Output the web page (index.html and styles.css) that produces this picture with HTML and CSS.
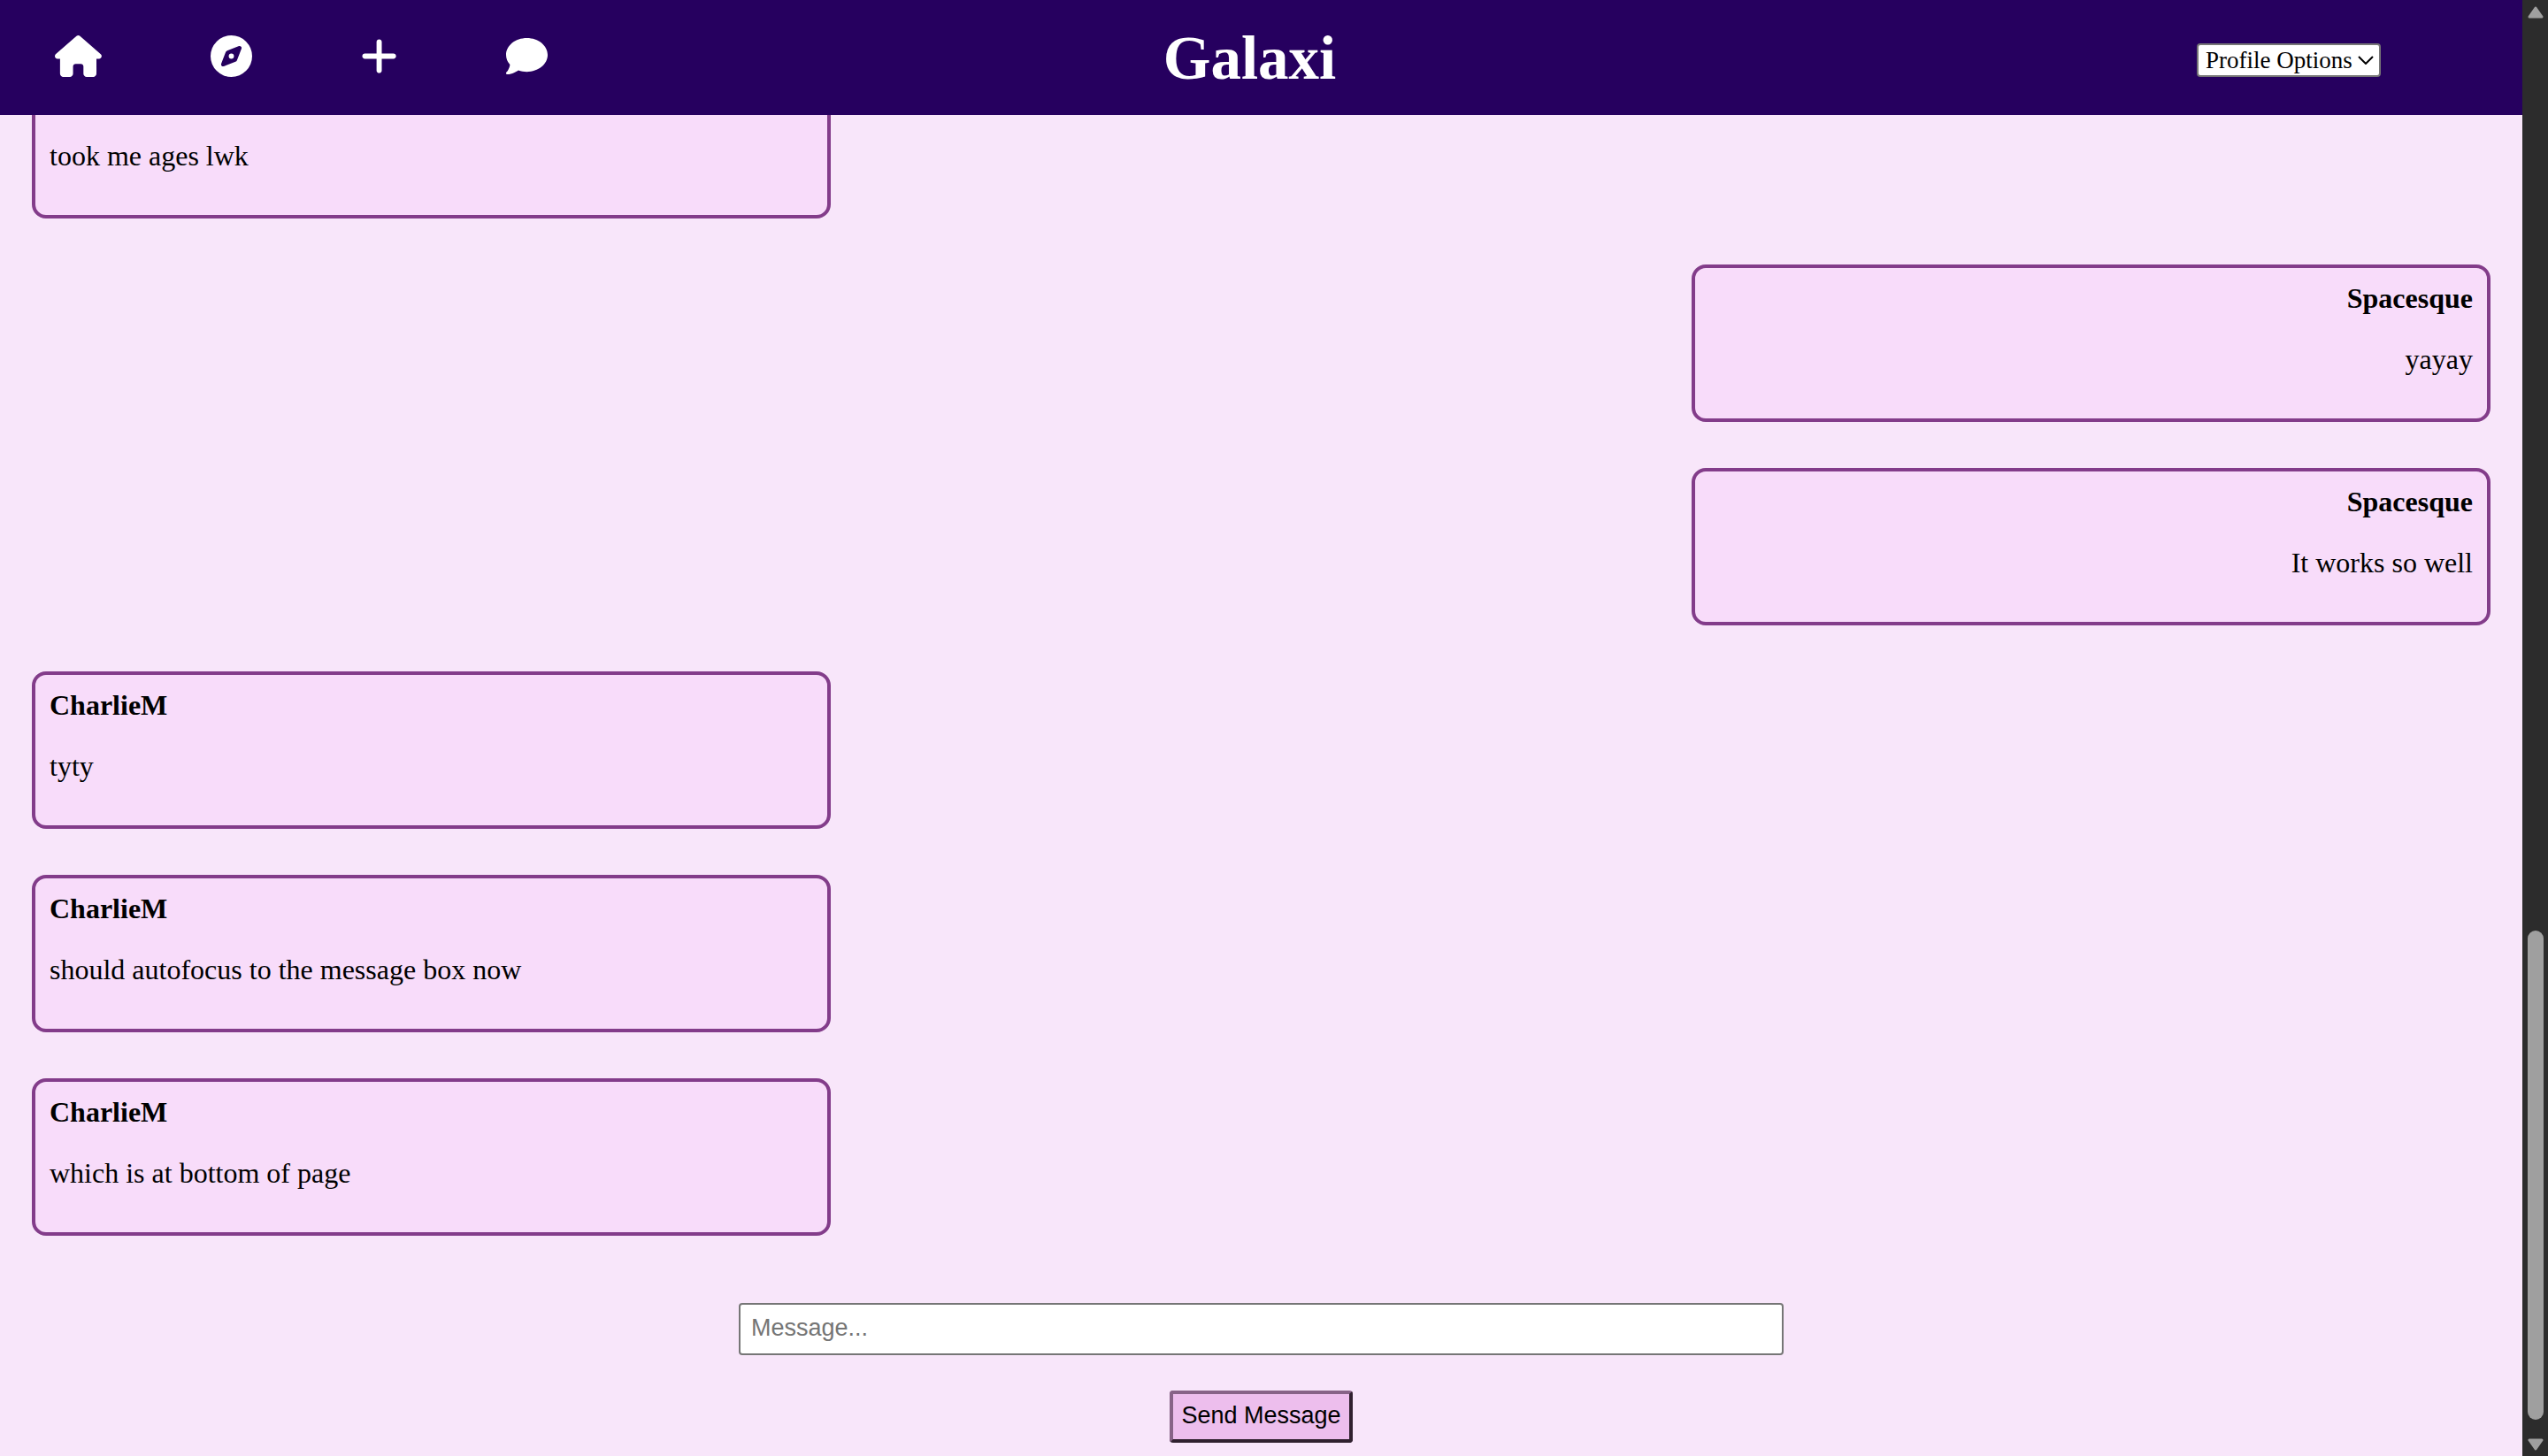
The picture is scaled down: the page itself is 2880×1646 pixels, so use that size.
FILE: index.html
```html
<!DOCTYPE html>
<html lang="en">
<head>
<meta charset="utf-8">
<meta name="viewport" content="width=device-width, initial-scale=1">
<title>Galaxi</title>
<link rel="stylesheet" href="styles.css">
</head>
<body>
<div class="page">
  <header class="topbar">
    <nav class="nav" aria-label="Main">
      <a href="#home" aria-label="Home"><svg class="icon" viewBox="0 0 576 512"><path d="M575.8 255.5c0 18-15 32.1-32 32.1h-32l.7 160.2c0 2.7-.2 5.4-.5 8.1V472c0 22.1-17.9 40-40 40H456c-1.1 0-2.2 0-3.3-.1c-1.4 .1-2.8 .1-4.2 .1H416 392c-22.1 0-40-17.9-40-40V448 384c0-17.7-14.3-32-32-32H256c-17.7 0-32 14.3-32 32v64 24c0 22.1-17.9 40-40 40H160 128.1c-1.5 0-3-.1-4.5-.2c-1.2 .1-2.4 .2-3.6 .2H104c-22.1 0-40-17.9-40-40V360c0-.9 0-1.9 .1-2.8V287.6H32c-18 0-32-14-32-32.1c0-9 3-17 10-24L266.4 8c7-7 15-8 22-8s15 2 21 7L564.8 231.5c8 7 12 15 11 24z"/></svg></a>
      <a href="#explore" aria-label="Explore"><svg class="icon" viewBox="0 0 512 512"><path d="M256 512A256 256 0 1 0 256 0a256 256 0 1 0 0 512zm50.7-186.9L162.4 380.6c-19.4 7.5-38.5-11.6-31-31l55.5-144.3c3.3-8.5 9.9-15.1 18.4-18.4l144.3-55.5c19.4-7.5 38.5 11.6 31 31L325.1 306.7c-3.2 8.5-9.9 15.1-18.4 18.4zM288 256a32 32 0 1 0 -64 0 32 32 0 1 0 64 0z"/></svg></a>
      <a href="#create" aria-label="Create"><svg class="icon" viewBox="0 0 448 512"><path d="M256 80c0-17.7-14.3-32-32-32s-32 14.3-32 32V224H48c-17.7 0-32 14.3-32 32s14.3 32 32 32H192V432c0 17.7 14.3 32 32 32s32-14.3 32-32V288H400c17.7 0 32-14.3 32-32s-14.3-32-32-32H256V80z"/></svg></a>
      <a href="#messages" aria-label="Messages"><svg class="icon" viewBox="0 0 512 512"><path d="M512 240c0 114.9-114.6 208-256 208c-37.1 0-72.3-6.4-104.1-17.9c-11.9 8.7-31.3 20.6-54.3 30.6C73.6 471.1 44.7 480 16 480c-6.5 0-12.3-3.9-14.8-9.9c-2.5-6-1.1-12.8 3.4-17.4l0 0 .3-.3c.3-.3 .7-.7 1.3-1.4c1.1-1.2 2.8-3.1 4.9-5.7c4.1-5 9.6-12.4 15.2-21.6c10-16.6 19.5-38.4 21.4-62.9C17.7 326.8 0 285.1 0 240C0 125.1 114.6 32 256 32s256 93.1 256 208z"/></svg></a>
    </nav>
    <h1 class="brand">Galaxi</h1>
    <div class="profile">
      <select class="profile-select" aria-label="Profile Options">
        <option>Profile Options</option>
      </select>
      <svg class="chevron" viewBox="0 0 18 10" aria-hidden="true"><path d="M1 1l8 8 8-8"/></svg>
    </div>
  </header>

  <main class="messages">
    <article class="message">
      <p class="text">took me ages lwk</p>
    </article>
    <article class="message own">
      <h2 class="author">Spacesque</h2>
      <p class="text">yayay</p>
    </article>
    <article class="message own">
      <h2 class="author">Spacesque</h2>
      <p class="text">It works so well</p>
    </article>
    <article class="message">
      <h2 class="author">CharlieM</h2>
      <p class="text">tyty</p>
    </article>
    <article class="message">
      <h2 class="author">CharlieM</h2>
      <p class="text">should autofocus to the message box now</p>
    </article>
    <article class="message">
      <h2 class="author">CharlieM</h2>
      <p class="text">which is at bottom of page</p>
    </article>
  </main>

  <form class="composer">
    <input class="composer-input" type="text" placeholder="Message..." aria-label="Message">
    <button class="send" type="submit">Send Message</button>
  </form>
</div>

<div class="scrollbar" aria-hidden="true">
  <svg class="arrow" viewBox="0 0 18 14"><path d="M9 2L16 12H2z"/></svg>
  <div class="track"><div class="thumb"></div></div>
  <svg class="arrow" viewBox="0 0 18 14"><path d="M9 12L2 2H16z"/></svg>
</div>
</body>
</html>
```
FILE: styles.css
```css
* {
  box-sizing: border-box;
}

body {
  margin: 0;
  height: 100vh;
  display: grid;
  grid-template-columns: minmax(0, 1fr) 29px;
  background: #f8e6fa;
  color: #000;
  font-family: "Liberation Serif", "Times New Roman", serif;
  font-size: 32px;
  line-height: 34px;
}

.page {
  display: flex;
  flex-direction: column;
  min-width: 0;
  height: 100vh;
}

/* Top bar */
.topbar {
  flex: none;
  display: grid;
  grid-template-columns: 1fr auto 1fr;
  align-items: center;
  height: 130px;
  padding: 0 88px 0 62px;
  background: #26005f;
  color: #fff;
}

.nav {
  display: flex;
  gap: 123px;
  margin-bottom: 3px;
}

.nav a {
  display: flex;
  color: inherit;
}

.icon {
  height: 47px;
  fill: currentColor;
}

.brand {
  margin: 2px 0 0;
  font-size: 69px;
  line-height: 80px;
}

.profile {
  display: grid;
  align-items: center;
  justify-self: end;
  margin: 6px 72px 0 0;
}

.profile-select,
.chevron {
  grid-area: 1 / 1;
}

.profile-select {
  appearance: none;
  width: 208px;
  height: 38px;
  padding: 0 8px;
  border: 2px solid #767676;
  border-radius: 4px;
  background: #fff;
  color: #000;
  font-family: inherit;
  font-size: 27px;
}

.chevron {
  justify-self: end;
  width: 18px;
  height: 10px;
  margin-right: 8px;
  fill: none;
  stroke: #000;
  stroke-width: 2;
  pointer-events: none;
}

/* Conversation, kept at its latest message */
.messages {
  flex: 1;
  min-height: 0;
  overflow: hidden;
  display: flex;
  flex-direction: column;
  justify-content: flex-end;
  gap: 52px;
  padding: 0 36px;
}

.message {
  flex: none;
  width: 32.5%;
  padding: 17px 16px;
  border: 4px solid #833c8a;
  border-radius: 16px;
  background: #f8dcfa;
}

/* The oldest message runs up under the top bar */
.message:first-child {
  padding-top: 86px;
}

.own {
  align-self: flex-end;
  text-align: right;
}

.author {
  margin: 0 0 35px;
  font-size: 32px;
}

.text {
  margin: 0 0 33px;
}

/* Composer */
.composer {
  flex: none;
  display: flex;
  flex-direction: column;
  align-items: center;
  gap: 40px;
  padding: 76px 36px 15px;
}

.composer-input,
.send {
  height: 59px;
  font-family: "Liberation Sans", Arial, sans-serif;
  font-size: 27px;
}

.composer-input {
  width: 42.5%;
  padding: 0 12px 2px;
  border: 2px solid #767676;
  border-radius: 4px;
  background: #fff;
}

.composer-input::placeholder {
  color: #757575;
}

.send {
  padding: 0 9px 2px;
  border: 4px solid;
  border-color: #876387 #30212f #30212f #876387;
  border-radius: 4px;
  background: #edbeed;
  color: #000;
}

/* Page scrollbar */
.scrollbar {
  display: flex;
  flex-direction: column;
  align-items: center;
  height: 100vh;
  padding: 7px 0 6px;
  background: #2c2c2c;
}

.arrow {
  width: 18px;
  height: 14px;
  fill: #9f9f9f;
  stroke: #9f9f9f;
  stroke-width: 3;
  stroke-linejoin: round;
}

.track {
  flex: 1;
  display: flex;
  flex-direction: column;
  justify-content: flex-end;
  padding: 21px 0;
}

.thumb {
  width: 18px;
  height: 35.4%;
  border-radius: 9px;
  background: #9f9f9f;
}
```
